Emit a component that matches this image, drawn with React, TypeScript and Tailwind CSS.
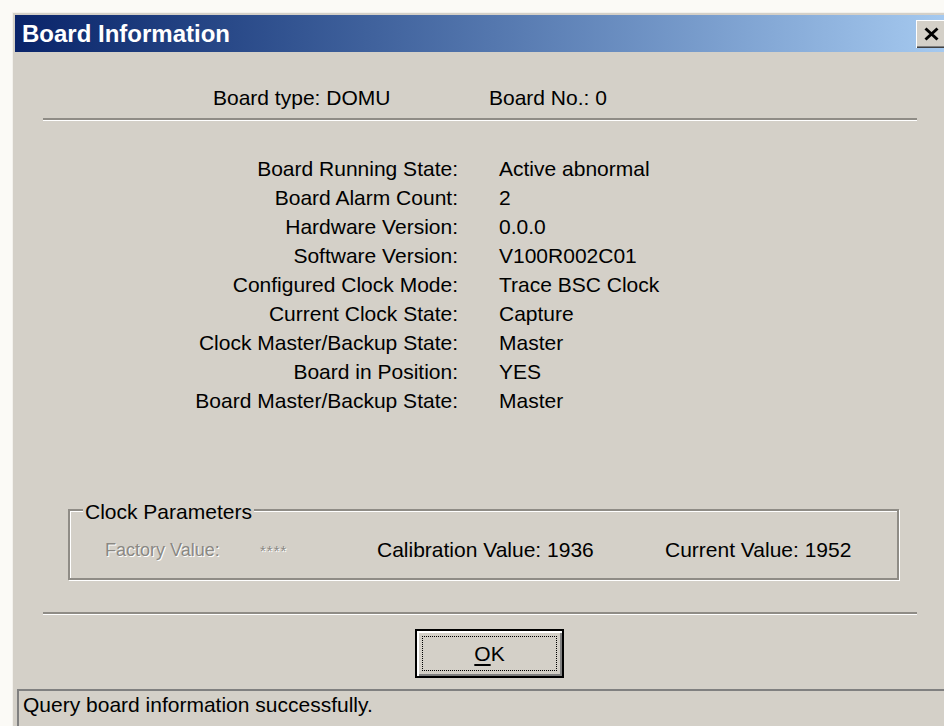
import React from "react";

const rows: [string, string][] = [
  ["Board Running State:", "Active abnormal"],
  ["Board Alarm Count:", "2"],
  ["Hardware Version:", "0.0.0"],
  ["Software Version:", "V100R002C01"],
  ["Configured Clock Mode:", "Trace BSC Clock"],
  ["Current Clock State:", "Capture"],
  ["Clock Master/Backup State:", "Master"],
  ["Board in Position:", "YES"],
  ["Board Master/Backup State:", "Master"],
];

// etched horizontal rule, classic 3D look
const Etched: React.FC<{ className?: string }> = ({ className = "" }) => (
  <div className={`h-[3px] border-t-2 border-b border-t-[#8f8c86] border-b-white ${className}`} />
);

const App: React.FC = () => {
  return (
    <div className="flex h-[726px] w-[944px] overflow-hidden bg-[#fbfaf6] pl-[12px] pt-[12px] font-['Liberation_Sans',Arial,sans-serif] text-[21px] leading-[24px] text-black">
      <div className="flex w-[938px] shrink-0 flex-col border-l border-t border-[#f3f1ec] bg-[#d4d0c8]">
        {/* title bar */}
        <div className="mx-[2px] mt-[2px] flex h-[37px] items-center bg-linear-to-r from-[#0a246a] to-[#a6caf0] pl-[7px] pr-[2px]">
          <span className="text-[24px] font-bold text-white">Board Information</span>
          <div className="flex-1" />
          <button className="flex h-[28px] w-[30px] items-center justify-center bg-[#d4d0c8] shadow-[inset_1px_1px_0_#fff,inset_-1px_-1px_0_#404040,inset_-2px_-2px_0_#808080]">
            <svg width="17" height="14" viewBox="0 0 17 14">
              <path d="M2.5 1.5 L14.5 12.5 M14.5 1.5 L2.5 12.5" stroke="#000" strokeWidth="3" fill="none" />
            </svg>
          </button>
        </div>

        {/* header */}
        <div className="mt-[31px] flex h-[29px] items-center pl-[200px]">
          <span className="w-[276px]">Board type: DOMU</span>
          <span>Board No.: 0</span>
        </div>

        <Etched className="ml-[30px] mt-[6px] w-[874px]" />

        {/* detail rows */}
        <div className="mt-[34px] flex flex-col">
          {rows.map(([label, value]) => (
            <div key={label} className="flex h-[28.9px] items-center">
              <span className="w-[445px] text-right">{label}</span>
              <span className="ml-[41px]">{value}</span>
            </div>
          ))}
        </div>

        {/* clock parameters group */}
        <fieldset className="ml-[55px] mt-[81px] w-[831px] border-2 border-[#8f8c86] px-0 pb-[16px] pt-[14px] shadow-[inset_1px_1px_0_#fff,1px_1px_0_#fff]">
          <legend className="ml-[13px] bg-[#d4d0c8] px-[2px] pt-[4px] leading-[24px]">Clock Parameters</legend>
          <div className="flex h-[24px] items-center pl-[35px]">
            <span className="w-[155px] text-[18px] text-[#8a8883] [text-shadow:1px_1px_0_#fff]">Factory Value:</span>
            <span className="w-[117px] self-start pt-[1px] text-[15px] tracking-[1px] text-[#8a8883] [text-shadow:1px_1px_0_#fff]">****</span>
            <span className="w-[288px]">Calibration Value: 1936</span>
            <span>Current Value: 1952</span>
          </div>
        </fieldset>

        <Etched className="ml-[30px] mt-[32px] w-[874px]" />

        {/* default push button */}
        <button className="ml-[402px] mt-[14px] h-[49px] w-[149px] border-2 border-black bg-[#d4d0c8] p-[5px] shadow-[inset_2px_2px_0_#fff,inset_-2px_-2px_0_#808080]">
          <span className="flex h-full w-full items-center justify-center border border-dotted border-black">
            <span className="underline underline-offset-[3px]">O</span>K
          </span>
        </button>

        {/* status bar */}
        <div className="ml-[4px] mt-[11px] flex-1 border-l-2 border-t-2 border-[#808080] pl-[4px] pt-[2px]">
          Query board information successfully.
        </div>
      </div>
    </div>
  );
};

export default App;
